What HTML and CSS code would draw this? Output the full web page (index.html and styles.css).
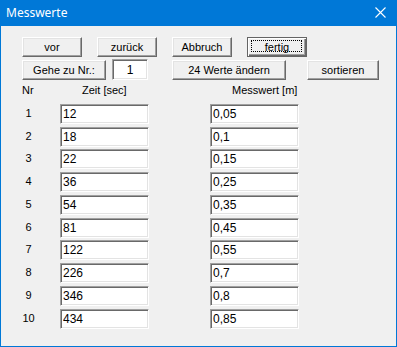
FILE: index.html
```
<!DOCTYPE html>
<html>
<head>
    <title>Messwerte</title>
    <meta charset="UTF-8">
    <link rel="stylesheet" href="styles.css">
</head>
<body>
    <div class="window">
        <div class="titlebar">
            <span class="title">Messwerte</span>
            <svg class="close" width="11" height="11" viewBox="0 0 11 11">
                <path d="M0.5 0.5 L10.5 10.5 M10.5 0.5 L0.5 10.5" stroke="#fff" stroke-width="1.1" fill="none"/>
            </svg>
        </div>

        <div class="content">
            <div class="btn-row">
                <button class="btn">vor</button>
                <button class="btn">zurück</button>
                <button class="btn">Abbruch</button>
                <button class="btn default">fertig</button>
            </div>

            <div class="btn-row second">
                <button class="btn goto">Gehe zu Nr.:</button>
                <input type="text" class="field nr-field" value="1">
                <button class="btn change">24 Werte ändern</button>
                <button class="btn sort">sortieren</button>
            </div>

            <div class="table">
                <div class="head nr">Nr</div>
                <div class="head col">Zeit [sec]</div>
                <div></div>
                <div class="head col">Messwert [m]</div>

                <div class="nr">1</div><input type="text" class="field" value="12"><div></div><input type="text" class="field" value="0,05">
                <div class="nr">2</div><input type="text" class="field" value="18"><div></div><input type="text" class="field" value="0,1">
                <div class="nr">3</div><input type="text" class="field" value="22"><div></div><input type="text" class="field" value="0,15">
                <div class="nr">4</div><input type="text" class="field" value="36"><div></div><input type="text" class="field" value="0,25">
                <div class="nr">5</div><input type="text" class="field" value="54"><div></div><input type="text" class="field" value="0,35">
                <div class="nr">6</div><input type="text" class="field" value="81"><div></div><input type="text" class="field" value="0,45">
                <div class="nr">7</div><input type="text" class="field" value="122"><div></div><input type="text" class="field" value="0,55">
                <div class="nr">8</div><input type="text" class="field" value="226"><div></div><input type="text" class="field" value="0,7">
                <div class="nr">9</div><input type="text" class="field" value="346"><div></div><input type="text" class="field" value="0,8">
                <div class="nr">10</div><input type="text" class="field" value="434"><div></div><input type="text" class="field" value="0,85">
            </div>
        </div>
    </div>
</body>
</html>
```

FILE: styles.css
```
body {
    margin: 0;
    font-family: 'Liberation Sans', Arial, sans-serif;
    font-size: 11px;
    color: #000;
    background: #fff;
}

.window {
    width: 397px;
    height: 347px;
    box-sizing: border-box;
    background: #0078d7;
    padding: 0 1px 1px 1px;
    display: flex;
    flex-direction: column;
}

.titlebar {
    height: 26px;
    display: flex;
    align-items: center;
    justify-content: space-between;
    padding: 0 10px 0 5px;
    flex-shrink: 0;
}

.title {
    color: #fff;
    font-size: 12px;
    font-family: 'Noto Sans', 'Liberation Sans', sans-serif;
    margin-top: -1px;
}

.close {
    display: block;
    margin-top: -2px;
}

.content {
    flex: 1;
    background: #f0f0f0;
    padding: 11px 0 0 21px;
}

.btn-row {
    display: flex;
    gap: 15px;
    align-items: flex-start;
}

.btn-row.second {
    margin-top: 3px;
    gap: 0;
}

.btn {
    position: relative;
    width: 60px;
    height: 20px;
    padding: 0;
    margin: 0;
    font-family: 'Liberation Sans', Arial, sans-serif;
    font-size: 11px;
    color: #000;
    background: #f0f0f0;
    border: 1px solid;
    border-color: #fff #696969 #696969 #fff;
    box-shadow: inset -1px -1px #a0a0a0, inset 1px 1px #e3e3e3;
    border-radius: 0;
}

.btn.default {
    border-color: #646464;
    box-shadow: inset 1px 1px #fff, inset -1px -1px #696969, inset -2px -2px #a0a0a0;
}

.btn.default::after {
    content: '';
    position: absolute;
    left: 3px;
    right: 4px;
    top: 2px;
    bottom: 4px;
    border: 1px dotted #000;
}

.goto {
    width: 84px;
}

.change {
    width: 114px;
    margin-left: 24px;
}

.sort {
    width: 72px;
    margin-left: 21px;
}

.field {
    box-sizing: border-box;
    height: 20px;
    margin: 0;
    padding: 0 0 0 2px;
    font-family: 'Liberation Sans', Arial, sans-serif;
    font-size: 12px;
    color: #000;
    background: #fff;
    border: 1px solid;
    border-color: #a0a0a0 #fff #fff #a0a0a0;
    box-shadow: inset 1px 1px #696969, inset -1px -1px #e3e3e3;
    outline: none;
}

.nr-field {
    width: 36px;
    height: 21px;
    margin: -1px 0 0 6px;
    padding: 0;
    text-align: center;
}

.table {
    display: grid;
    grid-template-columns: 38px 89px 61px 89px;
    grid-template-rows: 17px;
    grid-auto-rows: 20px;
    row-gap: 2.75px;
    margin-top: 4px;
}

.table .head {
    line-height: 13px;
}

.table .head.col {
    padding-left: 22px;
}

.nr {
    width: 13px;
    text-align: center;
    line-height: 20px;
    margin-top: -1px;
}

.table .head.nr {
    text-align: left;
    line-height: 13px;
    margin-top: 0;
}

.table .field {
    width: 89px;
}
```
